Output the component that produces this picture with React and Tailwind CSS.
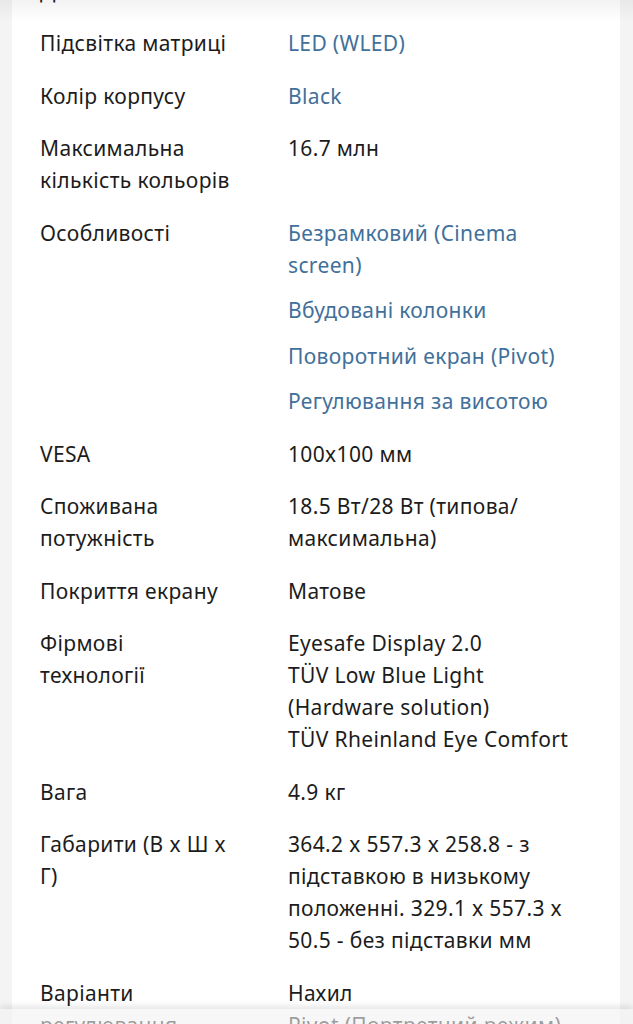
const specs = [
  { label: "Діагональ", values: ["27\""] },
  { label: "Підсвітка матриці", values: ["LED (WLED)"], link: true },
  { label: "Колір корпусу", values: ["Black"], link: true },
  { label: "Максимальна\nкількість кольорів", values: ["16.7 млн"] },
  {
    label: "Особливості",
    values: [
      "Безрамковий (Cinema\nscreen)",
      "Вбудовані колонки",
      "Поворотний екран (Pivot)",
      "Регулювання за висотою",
    ],
    link: true,
  },
  { label: "VESA", values: ["100x100 мм"] },
  { label: "Споживана\nпотужність", values: ["18.5 Вт/28 Вт (типова/\nмаксимальна)"] },
  { label: "Покриття екрану", values: ["Матове"] },
  {
    label: "Фірмові\nтехнології",
    values: ["Eyesafe Display 2.0\nTÜV Low Blue Light\n(Hardware solution)\nTÜV Rheinland Eye Comfort"],
  },
  { label: "Вага", values: ["4.9 кг"] },
  {
    label: "Габарити (В x Ш x\nГ)",
    values: ["364.2 x 557.3 x 258.8 - з\nпідставкою в низькому\nположенні. 329.1 x 557.3 x\n50.5 - без підставки мм"],
  },
  { label: "Варіанти\nрегулювання", values: ["Нахил\nPivot (Портретний режим)\nВисота"] },
];

const SpecRow = ({ spec }) => (
  <div className="flex gap-[16px] py-[10.25px]">
    <div className="w-[232px] shrink-0 whitespace-pre text-[#1c1c1c]">{spec.label}</div>
    <div className="flex-1 flex flex-col gap-[13.5px]">
      {spec.values.map((v, i) => (
        <div
          key={i}
          className={spec.link ? "text-[#41709a] whitespace-pre" : "text-[#1c1c1c] whitespace-pre"}
        >
          {v}
        </div>
      ))}
    </div>
  </div>
);

export default function App() {
  return (
    <div
      className="relative h-[1024px] overflow-hidden bg-[#f4f4f4]"
      style={{ fontFamily: '"Noto Sans", "Open Sans", sans-serif' }}
    >
      <div className="mx-[12px] w-[608px] bg-white px-[28px] pb-[40px] text-[21px] leading-[32px] tracking-[0.35px]">
        {/* list starts above the viewport, first row is cut off */}
        <div className="-mt-[35.75px]">
          {specs.map((spec, i) => (
            <SpecRow key={i} spec={spec} />
          ))}
        </div>
      </div>

      {/* header shadow at the top */}
      <div className="absolute top-0 inset-x-0 h-[22px] bg-gradient-to-b from-black/[0.05] to-transparent" />

      {/* bottom bar overlapping the content */}
      <div className="absolute bottom-0 inset-x-0 h-[15px] bg-[#f2f2f2]/60 shadow-[0_-3px_6px_rgba(0,0,0,0.1)]" />
    </div>
  );
}
